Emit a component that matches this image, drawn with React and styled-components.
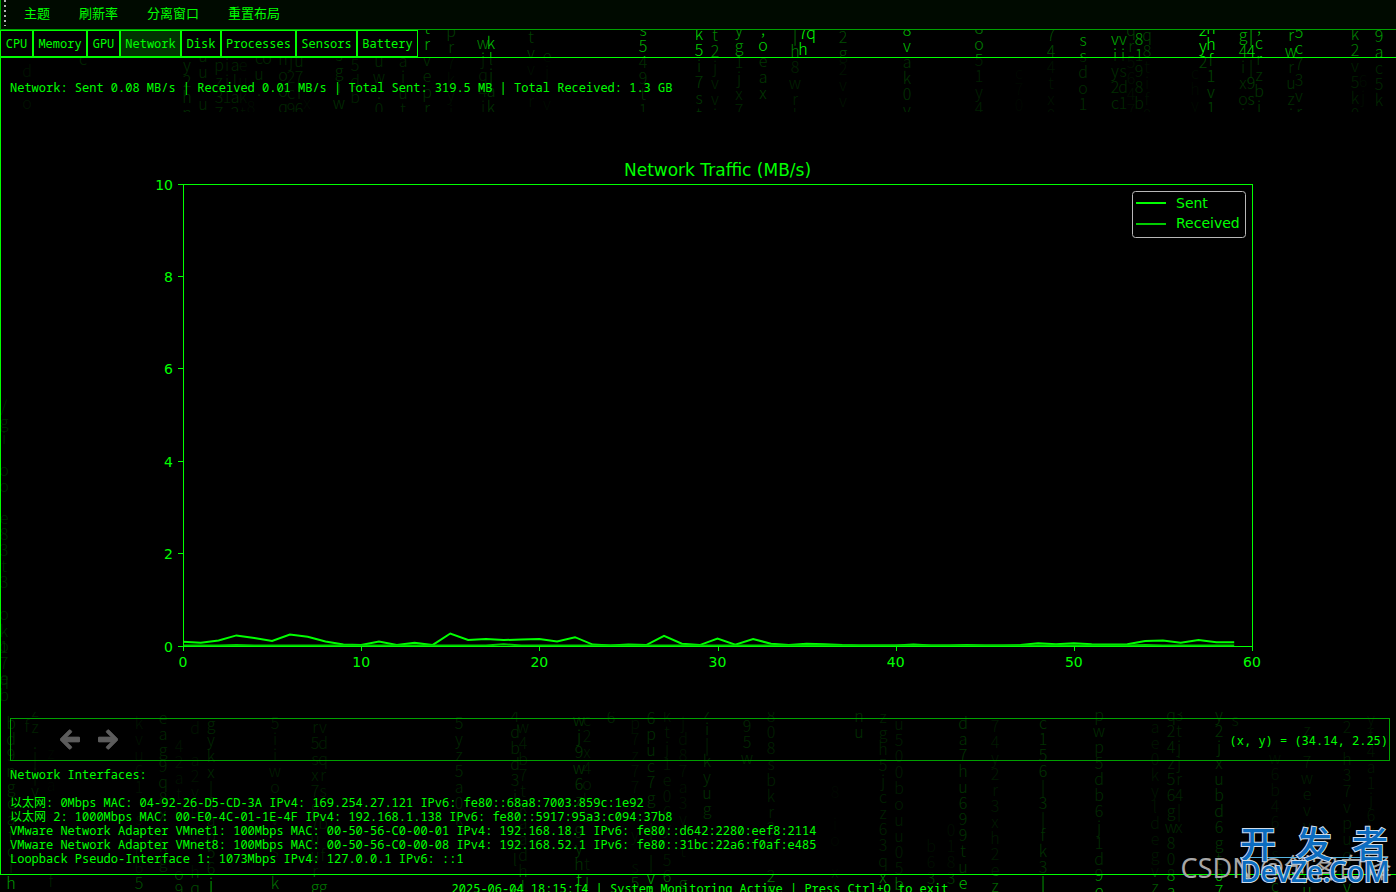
import React from "react";
import styled, { createGlobalStyle, css } from "styled-components";

const GREEN = "#00ff00";
const MID_GREEN = "#00a000";

const GlobalStyle = createGlobalStyle`
  *, *::before, *::after { box-sizing: border-box; }
  body { margin: 0; background: #000; }
`;

const monoFont = css`
  font-family: "Noto Sans Mono", "DejaVu Sans Mono", "Noto Sans CJK SC", monospace;
  font-size: 12px;
  line-height: 14px;
`;

const Window = styled.div`
  ${monoFont}
  position: relative;
  display: flex;
  flex-direction: column;
  height: 100vh;
  min-height: 480px;
  overflow: hidden;
  color: ${GREEN};
  background: #000;
`;

/* Falling glyphs behind the panels */
const RainLayer = styled.div`
  position: absolute;
  inset: 0;
  overflow: hidden;
`;

const Drop = styled.div`
  position: absolute;
  left: ${(p) => p.$x - 4}px;
  top: ${(p) => p.$y - 8}px;
  width: 8px;
  display: flex;
  flex-direction: column;
  align-items: center;
  font: 300 16px/16px "Noto Sans CJK SC", sans-serif;
  color: rgba(0, 255, 0, ${(p) => p.$o});
`;

const Glyph = styled.span`
  height: 16px;
  white-space: pre;
`;

const MenuBar = styled.nav`
  position: relative;
  display: flex;
  align-items: center;
  height: 30px;
  flex: none;
  padding: 0 0 3px 3px;
  background: #000a00;
  border-bottom: 1px solid ${MID_GREEN};
  border-left: 1px solid ${MID_GREEN};
`;

const Grip = styled.span`
  align-self: flex-start;
  width: 2px;
  height: 26px;
  margin-right: 4px;
  background: repeating-linear-gradient(#b0b0b0 0 2px, transparent 2px 5px);
`;

const MenuItem = styled.button`
  padding: 0 14px;
  margin-right: 1px;
  border: 0;
  background: none;
  color: inherit;
  font: 13px/20px "Noto Sans CJK SC", sans-serif;
`;

const TabBar = styled.div`
  position: relative;
  display: flex;
  flex: none;
  height: 27px;
`;

const Tab = styled.button`
  ${monoFont}
  width: ${(p) => p.$chars * 7 + 12}px;
  padding: 1px 0 0;
  border: 1px solid ${GREEN};
  color: ${GREEN};
  background: ${(p) => (p.$active ? "#003300" : "#000")};
  text-align: center;
  white-space: nowrap;
`;

const Pane = styled.main`
  position: relative;
  display: flex;
  flex-direction: column;
  flex: 1;
  min-height: 0;
  gap: 6px;
  padding: 10px 6px 8px 9px;
  border: solid ${GREEN};
  border-width: 1px 0 1px 1px;
  background: rgba(0, 0, 0, 0.75);
`;

const Summary = styled.p`
  display: flex;
  align-items: center;
  flex: none;
  height: 38px;
  margin: 0;
  padding-top: 2px;
  white-space: pre;
`;

const Figure = styled.figure`
  flex: 1;
  min-height: 0;
  margin: 0;
  background: #000;
`;

const Plot = styled.svg`
  display: block;
  width: 100%;
  height: 100%;
  font-family: "DejaVu Sans", sans-serif;
  font-size: 14px;
  fill: ${GREEN};
`;

const PlotTitle = styled.text`
  font-size: 17px;
  text-anchor: middle;
`;

const NavBar = styled.div`
  display: flex;
  align-items: center;
  flex: none;
  gap: 18px;
  height: 43px;
  padding: 0 1px 0 49px;
  border: 1px solid ${MID_GREEN};
`;

const NavButton = styled.button`
  display: flex;
  padding: 0;
  border: 0;
  background: none;
  color: #5c5c5c;
`;

const ArrowIcon = styled.svg`
  width: 20px;
  height: 23px;
  fill: currentColor;
`;

const Coordinates = styled.output`
  margin-left: auto;
  padding-top: 2px;
`;

const Interfaces = styled.section`
  flex: none;
  padding-top: 1px;
`;

const InterfacesTitle = styled.h2`
  margin: 0 0 14px;
  font: inherit;
`;

const InterfaceList = styled.ul`
  margin: 0;
  padding: 0;
  list-style: none;
`;

const InterfaceRow = styled.li`
  height: 14px;
  white-space: pre;
`;

const StatusBar = styled.footer`
  position: relative;
  flex: none;
  height: 17px;
  padding-left: 4px;
  line-height: 28px;
  overflow: hidden;
  text-align: center;
  white-space: pre;
`;

const Credit = styled.div`
  position: absolute;
  right: 4px;
  bottom: 8px;
  font: 27px/32px "Noto Sans", "Noto Sans CJK SC", sans-serif;
  color: #a6a6a6;
  white-space: pre;
`;

const SiteMark = styled.div`
  position: absolute;
  right: 8px;
  bottom: 8px;
  width: 148px;
  color: #0b6cc0;
  -webkit-text-stroke: 2px #d0dce8;
  paint-order: stroke fill;
`;

const SiteMarkTop = styled.div`
  display: flex;
  justify-content: space-between;
  border-bottom: 1px solid #56b4e0;
  font: 500 36px/30px "Noto Sans CJK SC", sans-serif;
`;

const SiteMarkName = styled.div`
  font: 500 28px/26px "Noto Sans", sans-serif;
  white-space: nowrap;
`;

/* x centre, y centre of the first glyph, glyphs downwards, opacity */
const DROPS = [
  [27, 70, "d o", 0.3], [83, 58, "c", 0.6],
  [187, 64, "y2hn", 0.7], [203, 55, "uu u", 0.6], [219, 64, "pz37", 0.6],
  [227, 64, "ii1", 0.5], [235, 64, "ala2", 0.6], [243, 64, "eukt", 0.3],
  [251, 106, "8", 0.2], [259, 57, "cu.", 0.6], [267, 57, "o", 0.6],
  [283, 58, "hooq", 0.6], [291, 60, "j2c9", 0.5], [299, 60, "u7i6", 0.6],
  [307, 102, "x", 0.2], [339, 54, "sgiw", 0.7], [355, 64, "5db.", 0.5],
  [379, 60, "uw.0", 0.6], [403, 60, "aiut", 0.6],
  [427, 27, "trvepr", 0.7], [451, 30, "pr7kyi", 0.25], [483, 42, "wjq4j", 0.5],
  [491, 42, "kljak", 0.8], [531, 36, "tvv r", 0.25], [547, 55, "ej v", 0.2],
  [643, 29, "s549t1", 0.7], [699, 33, "k5i7st", 0.85], [715, 34, "t2jvvi", 0.5],
  [739, 29, "yg1jx7", 0.6], [763, 28, ";oeax", 0.85], [795, 34, "|h8wrl", 0.5],
  [803, 32, "7h", 1], [811, 32, "q", 1], [843, 36, "2g2vv", 0.3],
  [907, 29, "8vak0v", 0.75], [979, 27, "8o51y4", 0.5], [1019, 72, "c70", 0.15],
  [1051, 34, "744tx0", 0.3], [1083, 39, "ssdo1", 0.65], [1115, 38, "viy2ci", 0.7],
  [1123, 38, "visd1", 0.6], [1131, 29, "qr5647", 0.25], [1139, 38, "8198b", 0.6],
  [1147, 34, "q8tif0", 0.25], [1195, 72, "chy", 0.2], [1203, 29, "2y2", 1],
  [1211, 27, "hhf1v1", 1], [1243, 34, "g4ixoi", 0.7], [1251, 34, "|4|9s", 0.9],
  [1259, 26, ",crzbj", 0.8], [1291, 34, "rwruzi", 0.7], [1299, 31, "5c73vr", 0.7],
  [1355, 33, "k2v5k0", 0.5], [1363, 80, "6j", 0.2], [1379, 35, "9ac5k", 0.6],

  [4, 405, "/gi oo e83t3 o o e", 0.5], [4, 630, "k17qb", 0.6],
  [11, 722, "bd9ngcatcih", 0.6], [27, 725, "f", 0.5], [35, 710, "zz.||y", 0.5],
  [51, 752, "z a o   f", 0.15], [139, 722, "kvu61 s c65", 0.3],
  [163, 717, "eag9q8x kg", 0.6], [179, 745, "42atu r o9q", 0.3],
  [195, 727, "d a2vp x hqd", 0.3], [211, 723, "gykx|fao56j", 0.6],
  [275, 722, "5iiwo v s ks", 0.45], [315, 726, "r5sx7g7uurg", 0.5],
  [323, 726, "vdqrs b f gb", 0.45], [459, 722, "5yz5a0k", 0.6],
  [515, 715, "4dbd3io zl e", 0.6], [523, 726, "w4b7tkaadhl", 0.45],
  [579, 719, "wj9w6z 9yht", 0.8], [587, 719, "c2x4okb  tj", 0.45],
  [611, 716, "6", 0.6], [635, 722, "p7z77v y s5", 0.3],
  [651, 717, "6puc7g | |vj", 0.7], [667, 715, "ktj1e06y 56", 0.4],
  [683, 722, "jd87a3y t g", 0.3], [707, 712, "zi|kyug", 0.7],
  [747, 725, "95w", 0.6],
  [771, 715, "808sbkr2i 25", 0.5], [835, 791, "8 io xt", 0.15],
  [859, 715, "nu", 0.7], [883, 716, "zgh5jcz63qx", 0.5],
  [899, 723, "u500bouu05b", 0.45], [931, 845, "b63", 0.25],
  [951, 829, "0183", 0.25], [963, 722, "da7hu699tue", 0.75],
  [995, 725, "74y2r3xh2ez", 0.4], [1043, 722, "c156|3|fk3|", 0.75],
  [1099, 714, "pwp5db6j1d9e", 0.65], [1155, 726, "ae0kyldegvz", 0.35],
  [1171, 714, "q24z56gw808a", 0.6], [1179, 714, "3tjjr4|x", 0.5],
  [1219, 714, "y2jxubd6gt07", 0.75], [1235, 719, "s", 0.5],
  [1275, 757, "w6b46 s ch", 0.3], [1307, 729, "z 7wevv  pu", 0.45],
  [1347, 726, "2 h37vpuq y", 0.45], [1371, 718, "yf4a1j6k v", 0.35],
];

const MENUS = ["主题", "刷新率", "分离窗口", "重置布局"];
const TABS = ["CPU", "Memory", "GPU", "Network", "Disk", "Processes", "Sensors", "Battery"];

const INTERFACES = [
  "以太网: 0Mbps MAC: 04-92-26-D5-CD-3A IPv4: 169.254.27.121 IPv6: fe80::68a8:7003:859c:1e92",
  "以太网 2: 1000Mbps MAC: 00-E0-4C-01-1E-4F IPv4: 192.168.1.138 IPv6: fe80::5917:95a3:c094:37b8",
  "VMware Network Adapter VMnet1: 100Mbps MAC: 00-50-56-C0-00-01 IPv4: 192.168.18.1 IPv6: fe80::d642:2280:eef8:2114",
  "VMware Network Adapter VMnet8: 100Mbps MAC: 00-50-56-C0-00-08 IPv4: 192.168.52.1 IPv6: fe80::31bc:22a6:f0af:e485",
  "Loopback Pseudo-Interface 1: 1073Mbps IPv4: 127.0.0.1 IPv6: ::1",
];

const SENT = [
  0.09, 0.07, 0.12, 0.23, 0.17, 0.11, 0.25, 0.2, 0.1, 0.03, 0.02, 0.1, 0.02, 0.07, 0.02,
  0.27, 0.13, 0.15, 0.13, 0.14, 0.15, 0.1, 0.19, 0.03, 0.01, 0.03, 0.02, 0.22, 0.05, 0.02,
  0.16, 0.03, 0.15, 0.05, 0.02, 0.05, 0.04, 0.02, 0.01, 0.01, 0.01, 0.03, 0.01, 0.01, 0.02,
  0.01, 0.01, 0.02, 0.06, 0.04, 0.06, 0.04, 0.03, 0.04, 0.11, 0.12, 0.07, 0.13, 0.08, 0.08,
];
const RECEIVED = SENT.map((_, i) => (i === 3 || i === 54 ? 0.02 : i === 18 ? 0.04 : 0.01));

const AXES = { left: 173, right: 1242, top: 72, bottom: 534 };
const px = (v) => AXES.left + (v / 60) * (AXES.right - AXES.left);
const py = (v) => AXES.bottom - (v / 10) * (AXES.bottom - AXES.top);
const points = (series) => series.map((v, i) => `${px(i).toFixed(1)},${py(v).toFixed(1)}`).join(" ");

function TrafficChart() {
  const { left, right, top, bottom } = AXES;
  return (
    <Plot viewBox="0 0 1380 600" role="img" aria-label="Network Traffic">
      <PlotTitle x={(left + right) / 2} y={64}>Network Traffic (MB/s)</PlotTitle>
      <polyline points={points(SENT)} fill="none" stroke={GREEN} strokeWidth="2" />
      <polyline points={points(RECEIVED)} fill="none" stroke="#00cc00" strokeWidth="2" />
      <rect x={left + 0.5} y={top + 0.5} width={right - left} height={bottom - top} fill="none" stroke={GREEN} />
      {[0, 10, 20, 30, 40, 50, 60].map((v) => (
        <g key={v}>
          <path d={`M${Math.round(px(v)) + 0.5} ${bottom}v5`} stroke={GREEN} />
          <text x={px(v)} y={bottom + 21} textAnchor="middle">{v}</text>
        </g>
      ))}
      {[0, 2, 4, 6, 8, 10].map((v) => (
        <g key={v}>
          <path d={`M${left - 5} ${Math.floor(py(v)) + 0.5}h5`} stroke={GREEN} />
          <text x={left - 10} y={Math.floor(py(v)) + 6} textAnchor="end">{v}</text>
        </g>
      ))}
      <rect x="1122.500" y="79.500" width="113" height="46" rx="3" fill="#000" stroke="#b8b8b8" />
      <path d="M1126 91h30" stroke={GREEN} strokeWidth="2" />
      <path d="M1126 112h30" stroke="#00cc00" strokeWidth="2" />
      <text x="1166" y="96">Sent</text>
      <text x="1166" y="116">Received</text>
    </Plot>
  );
}

const ARROW_LEFT =
  "M257.5 445.1l-22.2 22.2c-9.4 9.4-24.6 9.4-33.9 0L7 273c-9.4-9.4-9.4-24.600 0-33.900L201.400 44.700c9.400-9.400 24.600-9.400 33.900 0l22.200 22.200c9.500 9.500 9.300 25-.4 34.300L155 200H424c13.300 0 24 10.700 24 24v64c0 13.300-10.700 24-24 24H155l102.100 98.800c9.800 9.300 10 24.800.4 34.300z";

function Arrow({ flipped }) {
  return (
    <ArrowIcon viewBox="0 0 448 512" aria-hidden="true">
      <path
        d={ARROW_LEFT}
        stroke="currentColor"
        strokeWidth="16"
        transform={flipped ? "translate(448 0) scale(-1 1)" : undefined}
      />
    </ArrowIcon>
  );
}

export default function App() {
  return (
    <>
      <GlobalStyle />
      <Window>
        <RainLayer aria-hidden="true">
          {DROPS.map(([x, y, glyphs, o], i) => (
            <Drop key={i} $x={x} $y={y} $o={o}>
              {[...glyphs].map((g, j) => <Glyph key={j}>{g}</Glyph>)}
            </Drop>
          ))}
        </RainLayer>
        <MenuBar>
          <Grip />
          {MENUS.map((m) => <MenuItem key={m}>{m}</MenuItem>)}
        </MenuBar>
        <TabBar role="tablist">
          {TABS.map((t) => (
            <Tab key={t} role="tab" aria-selected={t === "Network"} $chars={t.length} $active={t === "Network"}>{t}</Tab>
          ))}
        </TabBar>
        <Pane>
          <Summary>Network: Sent 0.08 MB/s | Received 0.01 MB/s | Total Sent: 319.5 MB | Total Received: 1.3 GB</Summary>
          <Figure><TrafficChart /></Figure>
          <NavBar>
            <NavButton aria-label="Back"><Arrow /></NavButton>
            <NavButton aria-label="Forward"><Arrow flipped /></NavButton>
            <Coordinates>(x, y) = (34.14, 2.25)</Coordinates>
          </NavBar>
          <Interfaces>
            <InterfacesTitle>Network Interfaces:</InterfacesTitle>
            <InterfaceList>
              {INTERFACES.map((row) => <InterfaceRow key={row}>{row}</InterfaceRow>)}
            </InterfaceList>
          </Interfaces>
        </Pane>
        <StatusBar>2025-06-04 18:15:14 | System Monitoring Active | Press Ctrl+Q to exit</StatusBar>
        <Credit>CSDN @创客白泽</Credit>
        <SiteMark>
          <SiteMarkTop><span>开</span><span>发</span><span>者</span></SiteMarkTop>
          <SiteMarkName>DevZe.CoM</SiteMarkName>
        </SiteMark>
      </Window>
    </>
  );
}
